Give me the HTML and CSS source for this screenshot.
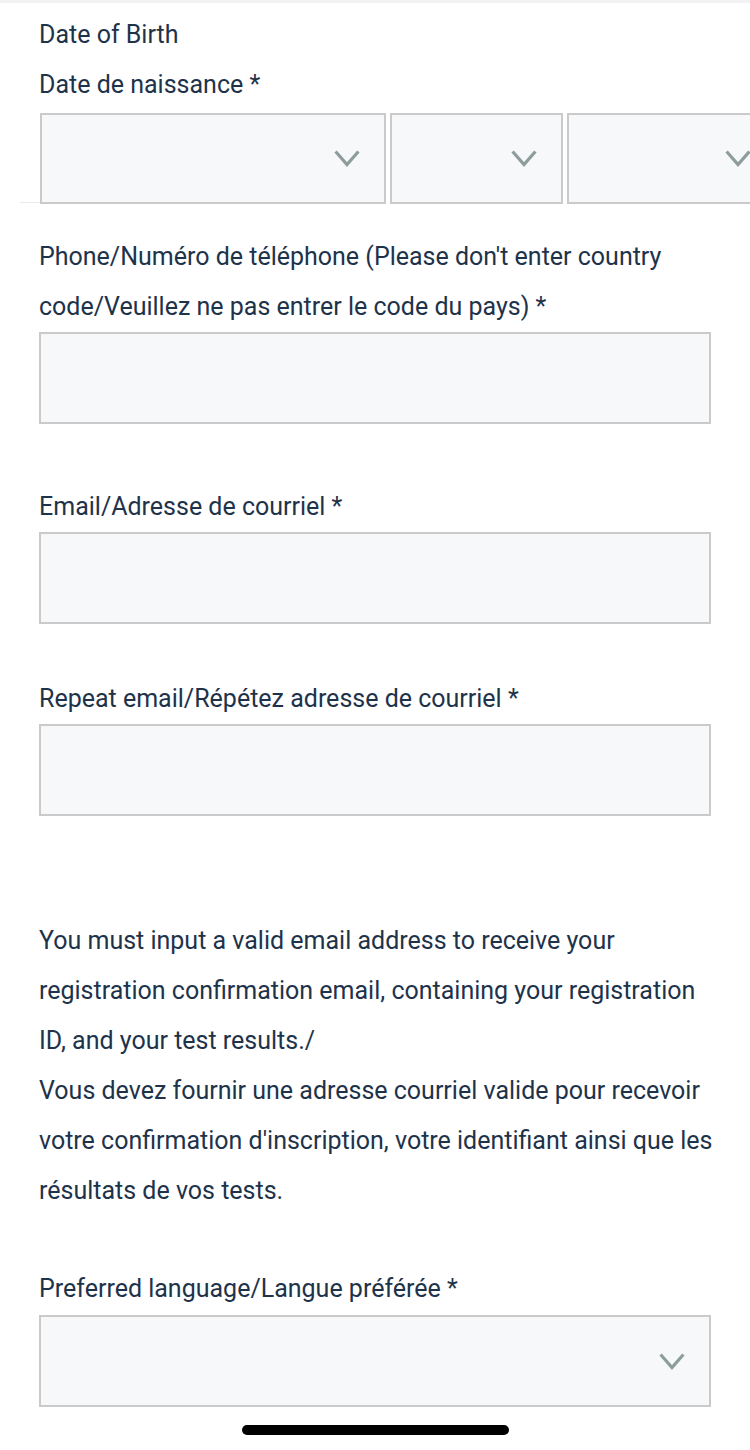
FILE: index.html
```
<!DOCTYPE html>
<html lang="fr">
<head>
<meta charset="utf-8">
<title>Registration form</title>
<link rel="stylesheet" href="styles.css">
</head>
<body>
<div class="page">
  <div class="topbar"></div>
  <div class="field dob">
    <div class="label">Date of Birth</div>
    <div class="label">Date de naissance *</div>
    <div class="date-row">
      <div class="select day">
        <svg class="chev" width="26" height="17" viewBox="0 0 26 17"><polyline points="1.6,1.5 13,14.5 24.4,1.5" fill="none" stroke="#8d9d9c" stroke-width="3.2"/></svg>
      </div>
      <div class="select month">
        <svg class="chev" width="26" height="17" viewBox="0 0 26 17"><polyline points="1.6,1.5 13,14.5 24.4,1.5" fill="none" stroke="#8d9d9c" stroke-width="3.2"/></svg>
      </div>
      <div class="select year">
        <svg class="chev" width="26" height="17" viewBox="0 0 26 17"><polyline points="1.6,1.5 13,14.5 24.4,1.5" fill="none" stroke="#8d9d9c" stroke-width="3.2"/></svg>
      </div>
    </div>
  </div>

  <div class="field phone">
    <div class="label">Phone/Numéro de téléphone (Please don't enter country code/Veuillez ne pas entrer le code du pays) *</div>
    <div class="input"></div>
  </div>

  <div class="field email">
    <div class="label">Email/Adresse de courriel *</div>
    <div class="input"></div>
  </div>

  <div class="field repeat">
    <div class="label">Repeat email/Répétez adresse de courriel *</div>
    <div class="input"></div>
  </div>

  <p class="notice">You must input a valid email address to receive your registration confirmation email, containing your registration ID, and your test results./<br>Vous devez fournir une adresse courriel valide pour recevoir votre confirmation d'inscription, votre identifiant ainsi que les résultats de vos tests.</p>

  <div class="field lang">
    <div class="label">Preferred language/Langue préférée *</div>
    <div class="input select-full">
      <svg class="chev" width="26" height="17" viewBox="0 0 26 17"><polyline points="1.6,1.5 13,14.5 24.4,1.5" fill="none" stroke="#8d9d9c" stroke-width="3.2"/></svg>
    </div>
  </div>

  <div class="home-indicator"></div>
</div>
</body>
</html>
```
FILE: styles.css
```
html, body {
  margin: 0;
  padding: 0;
  background: #ffffff;
}
body {
  width: 750px;
  height: 1450px;
  overflow: hidden;
  font-family: Roboto, "Liberation Sans", Arial, sans-serif;
  color: #1e334a;
}
.page {
  width: 750px;
  position: relative;
}
.topbar {
  height: 3px;
  background: #f1f2f3;
  margin-bottom: 7px;
}
.field {
  padding-left: 39px;
  padding-right: 36px;
}
.label {
  font-size: 25px;
  line-height: 50px;
}
.date-row {
  display: flex;
  gap: 4px;
  margin-top: 3px;
  margin-left: 1px;
  width: 740px;
}
.date-row::before {
  content: "";
  flex: none;
  width: 20px;
  height: 1px;
  background: #e8e9ea;
  align-self: flex-end;
  margin: 0 -4px 1px -20px;
}
.select, .input {
  box-sizing: border-box;
  background: #f7f8fa;
  border: 2px solid #cacaca;
  height: 92px;
}
.select {
  flex: none;
  height: 91px;
  display: flex;
  align-items: center;
  justify-content: flex-end;
  padding-right: 24px;
}
.day { width: 346px; }
.month { width: 173px; }
.year { width: 210px; }
.chev {
  display: block;
  margin-top: 0;
}
.phone { margin-top: 28px; }
.email { margin-top: 58px; }
.repeat { margin-top: 50px; }
.input {
  width: 672px;
}
.notice {
  margin: 100px 0 0 0;
  padding: 0 36px 0 39px;
  font-size: 25px;
  line-height: 50px;
}
.lang { margin-top: 48px; }
.lang .input { margin-top: 1px; }
.select-full {
  display: flex;
  align-items: center;
  justify-content: flex-end;
  padding-right: 24px;
}
.home-indicator {
  width: 267px;
  height: 10px;
  border-radius: 5px;
  background: #000000;
  margin: 18px 0 0 242px;
}
```
